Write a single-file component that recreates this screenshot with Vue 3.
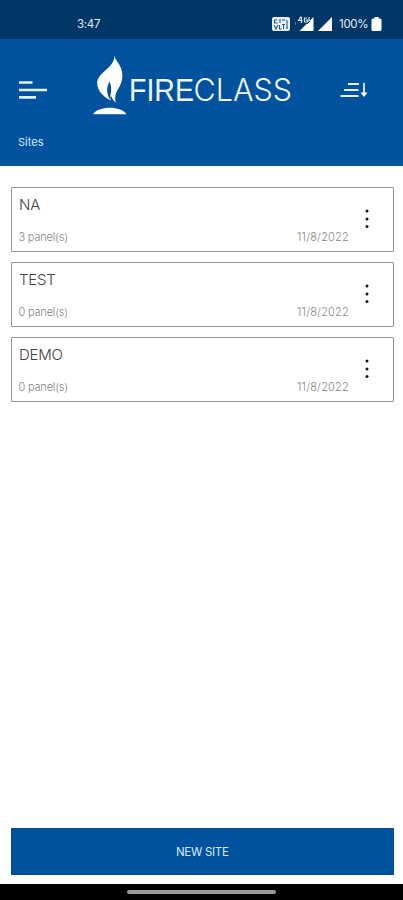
<script setup>
const sites = [
  { name: 'NA', panels: 3, date: '11/8/2022' },
  { name: 'TEST', panels: 0, date: '11/8/2022' },
  { name: 'DEMO', panels: 0, date: '11/8/2022' },
]
</script>

<template>
  <div class="screen">
    <div class="status">
      <span class="time">3:47</span>
      <div class="indicators">
        <svg class="volte" width="18" height="14" viewBox="0 0 18 14">
          <rect width="18" height="14" rx="2" fill="#e8eff6" />
          <path d="M2 3h3M2.500 3v3h3M8 2v4M10 3h3M2 8l2 4 2-4M7.500 8v4h2M10 7.500h3M11.500 8v4M15 3v8M14 11h2" fill="none" stroke="#31577d" stroke-width="1.100" />
        </svg>
        <svg class="signal-a" width="19" height="16" viewBox="0 0 19 16">
          <path d="M18.500 1v14H4.500z" fill="#fff" />
          <path d="M0.500 6v3" stroke="#527799" stroke-width="1" />
          <path d="M6 .5 3.500 4.500h4M6.500 1v6M12 2H9.500v4h3V4H11M14 1v4h2" fill="none" stroke="#dce7f1" stroke-width="1.200" />
          <path d="m12 8 3-3" stroke="#003767" stroke-width="1" />
        </svg>
        <svg class="signal-b" width="14" height="14" viewBox="0 0 14 14"><path d="M14 0v14H0z" fill="#fff" /></svg>
        <span class="percent">100%</span>
        <svg class="battery" width="11" height="14" viewBox="0 0 11 14"><path d="M3.500 0h4v1.500H9q1.500 0 1.500 1.500v9.500q0 1.500-1.500 1.500H2Q.5 14 .5 12.500V3Q.5 1.500 2 1.500h1.500z" fill="#fff" /></svg>
      </div>
    </div>

    <header class="header">
      <div class="toolbar">
        <svg class="menu" width="30" height="20" viewBox="0 0 30 20">
          <path d="M1 2.500h13.500M1 10h28M1 17.400h17" stroke="#e4f0fc" stroke-width="2.600" />
        </svg>
        <svg class="logo" width="200" height="62" viewBox="0 0 200 62">
          <path d="M21.200 1C22 7 29.400 11 29.400 21.500C29.400 28 26.500 33 23.800 37.500C22.300 40.500 21.800 43.500 22.600 48.500C20.300 46.500 18.800 44 17.900 41.500C17.400 43 17.300 44.500 17.500 46.500C11 43 4.200 37 4.200 29C4.200 18 22.500 14 21.200 1Z" fill="#fff" />
          <path d="M16.700 27.500C13.600 32 13 39 16.900 45.500C17.100 41 18.500 38 18.100 34C17.900 31.500 17.300 29.500 16.700 27.500Z" fill="#00529f" />
          <path d="M0 60.200C5 51.500 28.500 51.500 33.500 60.200Z" fill="#fff" />
          <text class="fire" x="36" y="47" textLength="65" lengthAdjust="spacingAndGlyphs">FIRE</text>
          <text class="class" x="100.500" y="47" textLength="98.500" lengthAdjust="spacingAndGlyphs">CLASS</text>
        </svg>
        <svg class="sort" width="28" height="16" viewBox="0 0 28 16">
          <path d="M8 2h11M4 8h14.500M.5 14h18" stroke="#e4f0fc" stroke-width="2.200" />
          <path d="M24 1v11" stroke="#fff" stroke-width="1.600" />
          <path d="M20.500 10.500h7L24 15z" fill="#fff" />
        </svg>
      </div>
      <span class="title">Sites</span>
    </header>

    <main class="list">
      <article v-for="site in sites" :key="site.name" class="card">
        <div class="info">
          <span class="name">{{ site.name }}</span>
          <div class="meta">
            <span class="panels">{{ site.panels }} panel(s)</span>
            <span class="date">{{ site.date }}</span>
          </div>
        </div>
        <svg class="more" width="4" height="20" viewBox="0 0 4 20" fill="#161616">
          <circle cx="2" cy="2" r="1.500" /><circle cx="2" cy="10" r="1.500" /><circle cx="2" cy="17.500" r="1.500" />
        </svg>
      </article>
    </main>

    <button class="new-site">NEW SITE</button>
    <div class="navbar"><div class="pill"></div></div>
  </div>
</template>

<style>
body { margin: 0; background: #fff; }
</style>

<style scoped>
.screen { width: 403px; height: 900px; display: flex; flex-direction: column; background: #fff; font-family: Inter, "Liberation Sans", sans-serif; overflow: hidden; }
.status { height: 39px; flex: none; box-sizing: border-box; padding: 9px 21px 0 77px; display: flex; justify-content: space-between; align-items: center; background: #003767; color: #e4edf5; font-size: 11.500px; }
.time { letter-spacing: -0.300px; }
.indicators { display: flex; align-items: center; }
.signal-a { margin-left: 5px; }
.signal-b { margin-left: 4px; }
.percent { margin-left: 7px; width: 29px; letter-spacing: -0.300px; white-space: nowrap; }
.battery { margin-left: 3px; }
.header { height: 126.500px; flex: none; background: #00529f; box-sizing: border-box; padding: 15px 35px 0 18px; display: flex; flex-direction: column; }
.toolbar { display: flex; align-items: flex-start; }
.menu { margin-top: 26px; }
.logo { margin-left: 45px; }
.fire, .class { font-size: 30.500px; fill: #f1f7fd; }
.fire { font-family: "Liberation Sans", sans-serif; font-weight: 400; }
.class { font-weight: 300; }
.sort { margin: 28px 0 0 47px; }
.title { margin-top: 18px; font-size: 11px; line-height: 16px; color: #dceafa; }
.list { flex: 1; padding: 21.500px 9px 0 11px; display: flex; flex-direction: column; gap: 10px; }
.card { height: 65px; box-sizing: border-box; border: 1px solid #929292; border-radius: 1px; padding: 0 24px 0 7px; display: flex; }
.info { width: 330px; flex: none; display: flex; flex-direction: column; }
.name { margin-top: 7px; font-size: 15px; line-height: 20px; font-weight: 300; letter-spacing: -0.200px; color: #424242; }
.meta { margin-top: 14px; display: flex; justify-content: space-between; font-size: 11px; line-height: 16px; font-weight: 300; color: #858585; }
.panels { letter-spacing: -0.200px; margin-left: -0.500px; }
.date { letter-spacing: 0.200px; }
.more { flex: none; margin: 21px 0 0 15.500px; }
.new-site { height: 47px; flex: none; margin: 0 9.500px 9px 11px; padding: 0; border: 0; background: #00529f; color: #dceafa; font: 11.500px Inter, sans-serif; letter-spacing: -0.300px; }
.navbar { height: 16px; flex: none; background: #000; display: flex; justify-content: center; align-items: center; }
.pill { width: 149px; height: 4px; border-radius: 2px; background: #999; }
</style>
